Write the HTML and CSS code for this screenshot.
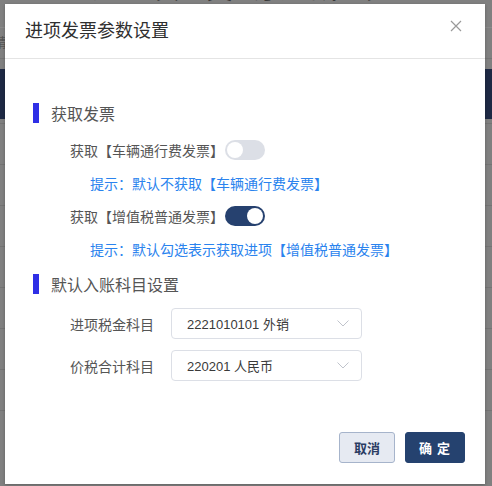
FILE: index.html
```html
<!DOCTYPE html>
<html lang="zh-CN">
<head>
<meta charset="utf-8">
<title>进项发票参数设置</title>
<link rel="stylesheet" href="styles.css">
</head>
<body>
<div class="page">
  <div class="page-title"><span class="page-title-text">进 项 发 票 新 表</span></div>
  <div class="page-bar"><span class="page-crumb">请</span></div>
  <div class="page-nav"></div>
  <div class="page-table">
    <div class="page-row"></div>
    <div class="page-row"></div>
    <div class="page-row"></div>
    <div class="page-row"></div>
    <div class="page-row"></div>
    <div class="page-row"></div>
    <div class="page-row"></div>
    <div class="page-row"></div>
  </div>
</div>

<div class="mask">
  <div class="dialog">
    <div class="dialog-header">
      <span class="dialog-title">进项发票参数设置</span>
      <svg class="dialog-close" width="12" height="12" viewBox="0 0 12 12"><path d="M1 1 L11 11 M11 1 L1 11" stroke="#9a9a9a" stroke-width="1.2" fill="none"/></svg>
    </div>
    <div class="dialog-body">
      <div class="section-title first"><span class="bar"></span>获取发票</div>
      <div class="switch-row r1">
        <span class="switch-label">获取【车辆通行费发票】</span>
        <span class="switch"><span class="knob"></span></span>
      </div>
      <div class="hint">提示：默认不获取【车辆通行费发票】</div>
      <div class="switch-row">
        <span class="switch-label">获取【增值税普通发票】</span>
        <span class="switch on"><span class="knob"></span></span>
      </div>
      <div class="hint">提示：默认勾选表示获取进项【增值税普通发票】</div>
      <div class="section-title second"><span class="bar"></span>默认入账科目设置</div>
      <div class="form-row f1">
        <span class="form-label">进项税金科目</span>
        <div class="select"><span class="select-text">2221010101 外销</span>
          <svg class="arrow" width="12" height="7" viewBox="0 0 12 7"><path d="M0.5 0.5 L6 6 L11.5 0.5" stroke="#c0c4cc" stroke-width="1" fill="none"/></svg>
        </div>
      </div>
      <div class="form-row f2">
        <span class="form-label">价税合计科目</span>
        <div class="select"><span class="select-text">220201 人民币</span>
          <svg class="arrow" width="12" height="7" viewBox="0 0 12 7"><path d="M0.5 0.5 L6 6 L11.5 0.5" stroke="#c0c4cc" stroke-width="1" fill="none"/></svg>
        </div>
      </div>
    </div>
    <div class="dialog-footer">
      <button class="btn btn-cancel">取消</button>
      <button class="btn btn-ok">确 定</button>
    </div>
  </div>
</div>
</body>
</html>
```

FILE: styles.css
```css
* { box-sizing: border-box; }
html, body { margin: 0; padding: 0; }
body {
  width: 492px;
  height: 486px;
  overflow: hidden;
  background: #7f7f7f;
  font-family: "Noto Sans CJK SC", "Noto Sans", sans-serif;
  position: relative;
}

/* underlying (dimmed) page */
.page { width: 492px; height: 486px; background: #808080; }
.page-title {
  height: 27px;
  overflow: hidden;
  text-align: center;
  color: #3a3a3a;
}
.page-title-text {
  display: block;
  margin-top: -36px;
  font-size: 34px;
  line-height: 40px;
  letter-spacing: 6px;
}
.page-bar {
  height: 32px;
  border-top: 1px solid #8a8a8a;
  border-bottom: 1px solid #747474;
}
.page-crumb { font-size: 13px; color: #555; line-height: 24px; margin-left: -6px; }
.page-nav { height: 50px; margin-top: 10px; background: #1e2944; }
.page-table { margin-top: 4px; }
.page-row { height: 41px; border-top: 1px solid #747474; }

/* modal */
.mask {
  position: absolute;
  inset: 0;
}
.dialog {
  position: absolute;
  left: 5px;
  top: 4px;
  width: 480px;
  height: 480px;
  background: #fff;
  box-shadow: 0 1px 3px rgba(0,0,0,0.25);
  display: flex;
  flex-direction: column;
}
.dialog-header {
  height: 55px;
  border-bottom: 1px solid #e4e4e4;
  display: flex;
  align-items: center;
  justify-content: space-between;
  padding: 0 23px 4px 20px;
}
.dialog-title {
  font-size: 18px;
  color: #2f2f2f;
  line-height: 24px;
}
.dialog-close { margin-top: -6px; }

.dialog-body {
  flex: 1;
  padding-top: 44px;
}
.section-title {
  display: flex;
  align-items: center;
  height: 20px;
  padding-left: 28px;
  font-size: 16px;
  color: #555;
  line-height: 20px;
}
.section-title .bar {
  width: 6px;
  height: 20px;
  background: #2f2fe6;
  margin-right: 12px;
}
.section-title.second { margin-top: 15px; }

.switch-row {
  display: flex;
  align-items: center;
  height: 20px;
  padding-left: 65px;
  margin-top: 13px;
}
.switch-row.r1 { margin-top: 17px; }
.switch-label {
  font-size: 14px;
  color: #555;
  line-height: 20px;
}
.switch {
  width: 40px;
  height: 20px;
  border-radius: 10px;
  background: #dcdfe6;
  position: relative;
  margin-left: 1px;
}
.switch .knob {
  position: absolute;
  top: 2px;
  left: 2px;
  width: 16px;
  height: 16px;
  border-radius: 50%;
  background: #fff;
}
.switch.on { background: #26416f; }
.switch.on .knob { left: 22px; }

.hint {
  margin-top: 13px;
  padding-left: 85px;
  font-size: 14px;
  line-height: 20px;
  color: #2a83ee;
}

.form-row {
  display: flex;
  align-items: center;
  padding-left: 65px;
}
.form-row.f1 { margin-top: 14px; }
.form-row.f2 { margin-top: 11px; }
.form-label {
  width: 101px;
  font-size: 14px;
  color: #555;
  line-height: 20px;
}
.select {
  width: 191px;
  height: 31px;
  border: 1px solid #dcdfe6;
  border-radius: 4px;
  display: flex;
  align-items: center;
  justify-content: space-between;
  padding: 0 12px 0 15px;
}
.select-text {
  font-family: "Liberation Sans", "Noto Sans CJK SC", sans-serif;
  font-size: 13px;
  color: #3a3a3a;
}

.dialog-footer {
  display: flex;
  justify-content: flex-end;
  gap: 10px;
  padding: 0 20px 21px 0;
}
.btn {
  height: 31px;
  border-radius: 3px;
  font-family: "Noto Sans CJK SC", sans-serif;
  font-size: 13px;
  font-weight: 700;
  padding: 0;
  cursor: pointer;
}
.btn-cancel {
  width: 56px;
  background: #e6eaf2;
  border: 1px solid #a6b4cb;
  color: #2b3c63;
}
.btn-ok {
  width: 60px;
  background: #25426f;
  border: 1px solid #25426f;
  color: #fff;
  letter-spacing: 1px;
}
```
